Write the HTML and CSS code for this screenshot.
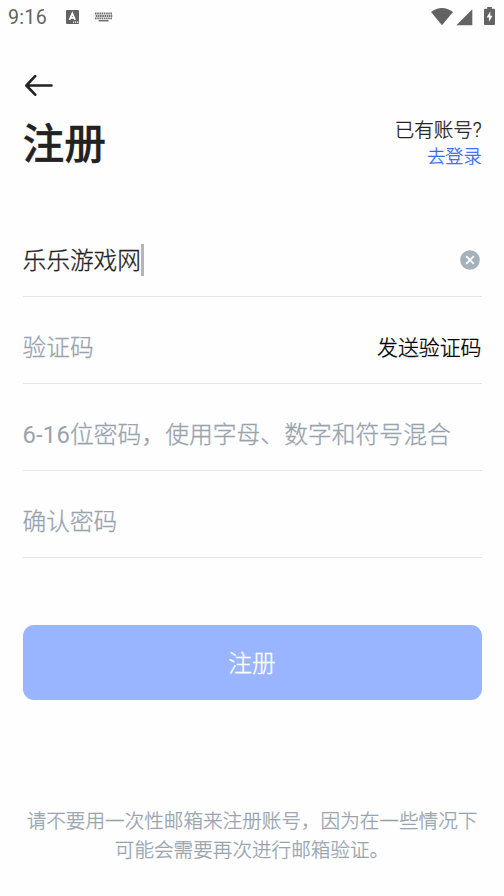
FILE: index.html
```html
<!DOCTYPE html>
<html lang="zh-CN">
<head>
<meta charset="utf-8">
<title>注册</title>
<link rel="stylesheet" href="styles.css">
</head>
<body>
<div class="status">
  <span class="time">9:16</span>
  <svg class="ime" width="14" height="15" viewBox="0 0 14 15"><rect x="0" y="0" width="13" height="14" rx="1" fill="#636363"/><path d="M3.5 9.8 6.3 3.4 9.1 9.8M4.7 7.9h3.2" fill="none" stroke="#fff" stroke-width="1.7"/><path d="M7 12.2h1.2M9 12.2h1.2M11 12.2h1.2" stroke="#fff" stroke-width="1.2"/></svg>
  <svg class="keyboard" width="18" height="10" viewBox="0 0 18 10"><path d="M0 1.5h17.5M.7 4h16.5M0 6.3h17.5" stroke="#707070" stroke-width="1.8" stroke-dasharray="1.6 .6"/><path d="M3.6 8.7h10" stroke="#707070" stroke-width="1.5"/></svg>
  <svg class="wifi" width="22" height="18" viewBox="0 0 22 18"><path d="M0 4Q11-4 22 4L11 17.2Z" fill="#636363"/></svg>
  <svg class="signal" width="17" height="17" viewBox="0 0 17 17"><path d="M16.3.3V16.3H.3Z" fill="#636363"/></svg>
  <svg class="battery" width="11" height="18" viewBox="0 0 11 18"><path d="M3.2 0h4.6v1.8H10q1 0 1 1V17q0 1-1 1H1q-1 0-1-1V2.8q0-1 1-1h2.2Z" fill="#636363"/><path d="M6.3 4.6 2.6 10.4H5v4.4L8.5 8.8H6.3Z" fill="#fff"/></svg>
</div>
<main class="page">
  <svg class="back" width="30" height="22" viewBox="0 0 30 22"><path d="M11.2 2.2 2.4 11.5l8.8 9.2M2.6 11.5H27.5" fill="none" stroke="#222" stroke-width="2.6" stroke-linecap="round" stroke-linejoin="round"/></svg>
  <header class="head">
    <h1 class="title">注册</h1>
    <div class="login"><div class="have">已有账号?</div><div class="link">去登录</div></div>
  </header>
  <form class="form">
    <div class="field filled"><span>乐乐游戏网</span><i class="caret"></i>
      <svg class="clear" width="20" height="20" viewBox="0 0 20 20"><circle cx="10" cy="10" r="9.8" fill="#a5b0bb"/><path d="M6.2 6.2l7.6 7.6M13.8 6.2l-7.6 7.6" stroke="#fff" stroke-width="1.8"/></svg>
    </div>
    <div class="field"><span>验证码</span><span class="send">发送验证码</span></div>
    <div class="field hint"><span><span class="range">6-16</span>位密码，使用字母、数字和符号混合</span></div>
    <div class="field"><span>确认密码</span></div>
  </form>
  <div class="submit">注册</div>
  <p class="note">请不要用一次性邮箱来注册账号，因为在一些情况下<br>可能会需要再次进行邮箱验证。</p>
</main>
</body>
</html>
```
FILE: styles.css
```css
* { box-sizing: border-box; }
body {
  margin: 0;
  height: 896px;
  overflow: hidden;
  background: #fefefe;
  color: #222;
  font-family: Roboto, "Noto Sans CJK SC", sans-serif;
  font-weight: 300;
  -webkit-text-stroke: .3px currentColor;
}
.status {
  display: flex;
  align-items: center;
  height: 34px;
  padding: 0 9px 0 8px;
  color: #636363;
}
.time { width: 58px; padding-top: 2px; font-size: 19.6px; font-weight: 400; line-height: 34px; letter-spacing: .3px; -webkit-text-stroke: 0; }
.keyboard { margin-left: 15px; }
.wifi { margin-left: auto; }
.signal { margin-left: 3px; }
.battery { margin-left: 11px; margin-top: -2px; }
.page { padding: 40px 22.5px 0 22.5px; }
.back { display: block; margin-left: 1px; }
.head {
  display: flex;
  justify-content: space-between;
  height: 92px;
  padding-top: 18px;
}
.title { margin: 0; padding-top: 1px; font-size: 41.8px; font-weight: 500; line-height: 60px; -webkit-text-stroke: .3px #222; }
.login { padding-top: 4px; text-align: right; line-height: 26px; white-space: nowrap; }
.have { font-size: 19.5px; }
.link { font-size: 18.1px; color: #2f6bf6; }
.form { padding-top: 22px; }
.field {
  display: flex;
  align-items: center;
  height: 87px;
  padding-top: 11px;
  border-bottom: 1px solid #e6e6e8;
  font-size: 23.7px;
  color: #98a3ae;
  white-space: nowrap;
}
.filled { padding-top: 13px; color: #222; }
.filled span { margin-top: -2px; }
.hint { font-size: 23.8px; }
.range { font-weight: 400; letter-spacing: .2px; -webkit-text-stroke: 0; }
.caret { width: 3px; height: 32px; background: #b5b5b5; }
.clear { margin: 0 1.5px 0 auto; }
.send { margin-left: auto; font-size: 20.9px; color: #000; }
.submit {
  height: 75px;
  margin-top: 67px;
  padding-top: 2px;
  border-radius: 11px;
  background: #99b5ff;
  color: #fff;
  font-size: 23.7px;
  line-height: 75px;
  text-align: center;
}
.note {
  margin: 107px -10px 0;
  font-size: 19.6px;
  line-height: 29px;
  text-align: center;
  color: #98a3ae;
  white-space: nowrap;
}
```
